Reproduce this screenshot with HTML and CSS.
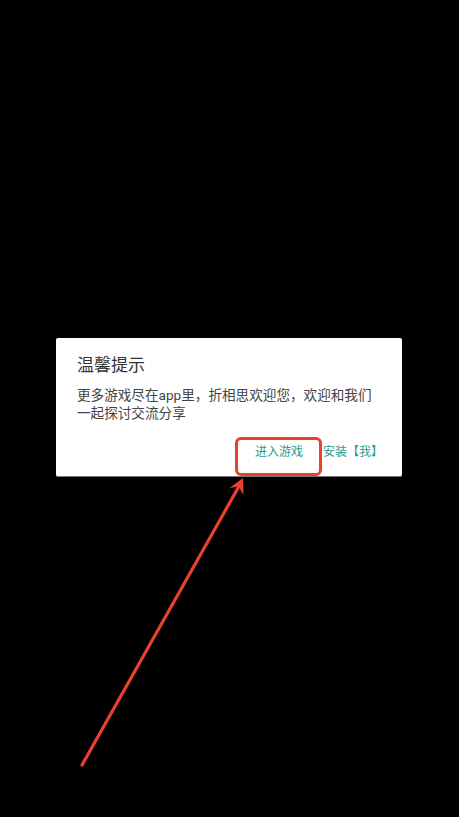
FILE: index.html
```html
<!DOCTYPE html>
<html lang="zh-CN">
<head>
<meta charset="utf-8">
<title>温馨提示</title>
<link rel="stylesheet" href="styles.css">
</head>
<body>
<div class="screen">
  <div class="dialog">
    <div class="dialog-title">温馨提示</div>
    <div class="dialog-body">更多游戏尽在app里，折相思欢迎您，欢迎和我们一起探讨交流分享</div>
    <div class="dialog-actions">
      <span class="btn">进入游戏</span>
      <span class="btn">安装【我】</span>
    </div>
  </div>
  <div class="highlight"></div>
  <svg class="arrow" width="459" height="817" viewBox="0 0 459 817">
    <line x1="82" y1="765" x2="238" y2="488" stroke="#e8412c" stroke-width="3.2" stroke-linecap="round"/>
    <polygon points="243,478 229.5,488 238.5,486.5 243.5,495" fill="#e8412c"/>
  </svg>
</div>
</body>
</html>
```

FILE: styles.css
```css
html, body {
  margin: 0;
  padding: 0;
  background: #000;
}
.screen {
  position: relative;
  width: 459px;
  height: 817px;
  overflow: hidden;
  padding-top: 338px;
  box-sizing: border-box;
  font-family: Roboto, "Noto Sans CJK SC", sans-serif;
}
.dialog {
  margin-left: 56px;
  width: 346px;
  height: 139px;
  background: #fff;
  border-radius: 2px;
  box-sizing: border-box;
  padding: 15px 0 0 21px;
  border-bottom: 1px solid #777;
}
.dialog-title {
  font-size: 17px;
  line-height: 24px;
  color: #333;
}
.dialog-body {
  margin-top: 9px;
  font-size: 13.6px;
  line-height: 18px;
  color: #444;
  width: 300px;
}
.dialog-actions {
  display: flex;
  justify-content: flex-end;
  gap: 20px;
  margin-top: 22px;
  padding-right: 19px;
}
.btn {
  font-size: 12px;
  line-height: 16px;
  color: #1f9b8c;
}
.highlight {
  position: absolute;
  left: 235px;
  top: 437px;
  width: 87px;
  height: 39px;
  border: 3px solid #e8412c;
  border-radius: 6px;
  box-sizing: border-box;
}
.arrow {
  position: absolute;
  left: 0;
  top: 0;
}
```
